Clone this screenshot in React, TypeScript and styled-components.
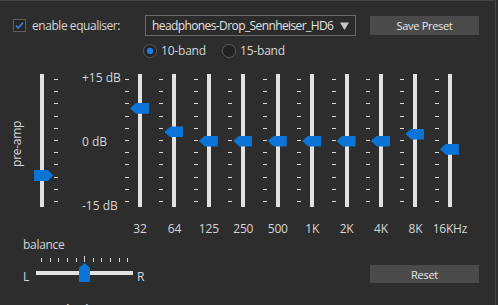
import React from "react";
import styled, { createGlobalStyle } from "styled-components";

const GlobalStyle = createGlobalStyle`
  html, body { margin: 0; padding: 0; background: #2d2d2d; overflow: hidden; }
  body { font-family: "Open Sans", "Noto Sans", sans-serif; font-size: 12px; color: #d6d6d6; }
  * { box-sizing: border-box; }
`;

const BLUE = "#0b74d6";
const TRACK = "#e2e2e2";
const TICK = "#d8d8d8";

const Panel = styled.div`
  width: 496px;
  height: 305px;
  border-top: 1px solid #464646;
  border-right: 1px solid #464646;
  display: flex;
  flex-direction: column;
`;

const HeaderRow = styled.div`
  display: flex;
  align-items: center;
  height: 21px;
  margin-top: 14px;
  padding-left: 13px;
`;

const EnableLabel = styled.label`
  width: 132px;
  display: flex;
  align-items: center;
  gap: 6px;
  line-height: 16px;
  letter-spacing: -0.45px;
`;

const Combo = styled.div`
  width: 211px;
  height: 21px;
  border: 1px solid #6a6a6a;
  background: #2b2b2b;
  display: flex;
  align-items: center;
  padding-left: 6px;
`;

const ComboText = styled.span`
  flex: 1;
  overflow: hidden;
  white-space: nowrap;
  line-height: 16px;
  color: #e2e2e2;
  letter-spacing: -0.6px;
`;

const ArrowBox = styled.span`
  display: flex;
  margin: 0 6px 0 5px;
`;

const Button = styled.div<{ $top?: number }>`
  width: 109px;
  height: 19px;
  margin-left: 14px;
  margin-top: ${(p) => p.$top ?? 0}px;
  background: #4a4a4a;
  color: #e6e6e6;
  font-size: 11px;
  letter-spacing: -0.3px;
  display: flex;
  align-items: center;
  justify-content: center;
`;

const ResetButton = styled(Button)`
  height: 18px;
  margin-left: auto;
  margin-right: 16px;
`;

const RadioRow = styled.div`
  display: flex;
  align-items: center;
  height: 15px;
  margin-top: 7px;
  padding-left: 143px;
`;

const RadioOption = styled.label<{ $w?: number }>`
  display: flex;
  align-items: center;
  gap: 4px;
  line-height: 16px;
  letter-spacing: -0.2px;
  width: ${(p) => (p.$w ? `${p.$w}px` : "auto")};
`;

const EqArea = styled.div`
  display: flex;
  align-items: flex-start;
  margin-top: 16px;
`;

const PreAmpLabelCol = styled.div`
  width: 34px;
  height: 133px;
  display: flex;
  align-items: center;
  justify-content: center;
  padding-top: 6px;
`;

const VerticalText = styled.span`
  writing-mode: vertical-rl;
  transform: rotate(180deg);
  line-height: 14px;
  letter-spacing: -0.3px;
`;

const SliderBox = styled.div<{ $w: number; $lead?: number }>`
  position: relative;
  width: ${(p) => p.$w}px;
  height: 133px;
  display: flex;
  padding-left: ${(p) => p.$lead ?? 0}px;
`;

const Track = styled.div`
  width: 4px;
  height: 133px;
  background: ${TRACK};
`;

const TickCol = styled.div<{ $gap: number; $before?: boolean }>`
  width: 4px;
  height: 133px;
  padding: 5px 0;
  display: flex;
  flex-direction: column;
  justify-content: space-between;
  ${(p) => (p.$before ? `margin-right: ${p.$gap}px;` : `margin-left: ${p.$gap}px;`)}
`;

const Tick = styled.div`
  width: 4px;
  height: 1px;
  background: ${TICK};
`;

const Thumb = styled.div<{ $dir: "left" | "right" }>`
  position: absolute;
  left: ${(p) => (p.$dir === "left" ? 5 : 0)}px;
  width: 19px;
  height: 11px;
  background: ${BLUE};
  clip-path: ${(p) =>
    p.$dir === "left"
      ? "polygon(0 50%, 6px 0, 100% 0, 100% 100%, 6px 100%)"
      : "polygon(0 0, 14px 0, 100% 50%, 14px 100%, 0 100%)"};
`;

const DbScale = styled.div`
  width: 64.8px;
  padding-left: 24px;
  margin-top: -4px;
  height: 144px;
  display: flex;
  flex-direction: column;
  justify-content: space-between;
  line-height: 16px;
  white-space: nowrap;
`;

const BandGrid = styled.div`
  width: 344.4px;
  display: grid;
  grid-template-columns: repeat(10, 1fr);
`;

const BandCol = styled.div`
  display: flex;
  flex-direction: column;
  align-items: center;
`;

const FreqLabel = styled.div`
  margin-top: 14px;
  line-height: 16px;
  white-space: nowrap;
  letter-spacing: -0.2px;
`;

const BottomRow = styled.div`
  display: flex;
  align-items: flex-start;
`;

const BalanceBlock = styled.div`
  padding-left: 23px;
  display: flex;
  flex-direction: column;
`;

const BalanceLabel = styled.div`
  line-height: 16px;
  letter-spacing: -0.3px;
`;

const BalanceRow = styled.div`
  display: flex;
  align-items: flex-start;
  margin-top: 4px;
`;

const SideLetter = styled.span<{ $w?: number; $ml?: number }>`
  width: ${(p) => (p.$w ? `${p.$w}px` : "auto")};
  margin-left: ${(p) => p.$ml ?? 0}px;
  padding-top: 12px;
  line-height: 16px;
`;

const BalanceBox = styled.div`
  position: relative;
  width: 97px;
  height: 26px;
`;

const BalanceTicks = styled.div`
  display: flex;
  justify-content: space-between;
  align-items: flex-end;
  margin: 0 4.5px 0 5px;
  height: 5px;
`;

const VTick = styled.div<{ $tall?: boolean }>`
  width: 1px;
  height: ${(p) => (p.$tall ? 6 : 4)}px;
  background: ${TICK};
`;

const HTrack = styled.div`
  margin-top: 9px;
  height: 4px;
  background: ${TRACK};
`;

const UpThumb = styled.div`
  position: absolute;
  top: 6px;
  width: 11px;
  height: 19px;
  background: ${BLUE};
  clip-path: polygon(50% 0, 100% 5px, 100% 100%, 0 100%, 0 5px);
`;

const SectionTitle = styled.div`
  margin-top: 16px;
  padding-left: 30px;
  font-size: 13px;
  font-weight: 600;
  line-height: 16px;
  color: #d0d0d0;
`;

const CheckIcon = () => (
  <svg width="13" height="13" viewBox="0 0 13 13">
    <rect x="0.5" y="0.5" width="12" height="12" fill="#262626" stroke="#5f5f5f" />
    <path d="M3 6.6 L5.3 9 L10 3.6" fill="none" stroke="#3c7fd8" strokeWidth="1.6" />
  </svg>
);

const RadioIcon = ({ on }: { on?: boolean }) => (
  <svg width="14" height="14" viewBox="0 0 14 14">
    <circle cx="7" cy="7" r="6.5" fill="#222" stroke="#5a5a5a" />
    {on && <circle cx="7" cy="7" r="3.2" fill="#1e78e0" />}
  </svg>
);

const DownArrow = () => (
  <svg width="9" height="8" viewBox="0 0 9 8">
    <polygon points="0,0.5 9,0.5 4.5,8" fill="#c8c8c8" />
  </svg>
);

const TICKS = Array.from({ length: 11 }, (_, i) => i);

const thumbTop = (v: number) => 5 + ((15 - v) / 30) * 123 + 0.5 - 5.5;

const bands = [
  { label: "32", value: 8 },
  { label: "64", value: 2.2 },
  { label: "125", value: 0 },
  { label: "250", value: 0 },
  { label: "500", value: 0 },
  { label: "1K", value: 0 },
  { label: "2K", value: 0 },
  { label: "4K", value: 0 },
  { label: "8K", value: 1.7 },
  { label: "16KHz", value: -2 },
];

const Ticks = ({ gap, before }: { gap: number; before?: boolean }) => (
  <TickCol $gap={gap} $before={before}>
    {TICKS.map((i) => (
      <Tick key={i} />
    ))}
  </TickCol>
);

export default function App() {
  const preamp = -8.4;
  const balance = 0;
  return (
    <>
      <GlobalStyle />
      <Panel>
        <HeaderRow>
          <EnableLabel>
            <CheckIcon />
            enable equaliser:
          </EnableLabel>
          <Combo>
            <ComboText>headphones-Drop_Sennheiser_HD6</ComboText>
            <ArrowBox>
              <DownArrow />
            </ArrowBox>
          </Combo>
          <Button>Save Preset</Button>
        </HeaderRow>
        <RadioRow>
          <RadioOption $w={79}>
            <RadioIcon on />
            10-band
          </RadioOption>
          <RadioOption>
            <RadioIcon />
            15-band
          </RadioOption>
        </RadioRow>
        <EqArea>
          <PreAmpLabelCol>
            <VerticalText>pre-amp</VerticalText>
          </PreAmpLabelCol>
          <SliderBox $w={24} $lead={6}>
            <Track />
            <Ticks gap={10} />
            <Thumb $dir="right" style={{ top: thumbTop(preamp) }} />
          </SliderBox>
          <DbScale>
            <span>+15 dB</span>
            <span>0 dB</span>
            <span>-15 dB</span>
          </DbScale>
          <BandGrid>
            {bands.map((b) => (
              <BandCol key={b.label}>
                <SliderBox $w={30}>
                  <Ticks gap={9} before />
                  <Track />
                  <Thumb $dir="left" style={{ top: thumbTop(b.value) }} />
                </SliderBox>
                <FreqLabel>{b.label}</FreqLabel>
              </BandCol>
            ))}
          </BandGrid>
        </EqArea>
        <BottomRow>
          <BalanceBlock>
            <BalanceLabel>balance</BalanceLabel>
            <BalanceRow>
              <SideLetter $w={13}>L</SideLetter>
              <BalanceBox>
                <BalanceTicks>
                  {TICKS.map((i) => (
                    <VTick key={i} $tall={i === 5} />
                  ))}
                </BalanceTicks>
                <HTrack />
                <UpThumb style={{ left: 43 + balance * 43 }} />
              </BalanceBox>
              <SideLetter $ml={4}>R</SideLetter>
            </BalanceRow>
          </BalanceBlock>
          <ResetButton $top={28}>Reset</ResetButton>
        </BottomRow>
        <SectionTitle>DSP Plugins</SectionTitle>
      </Panel>
    </>
  );
}
